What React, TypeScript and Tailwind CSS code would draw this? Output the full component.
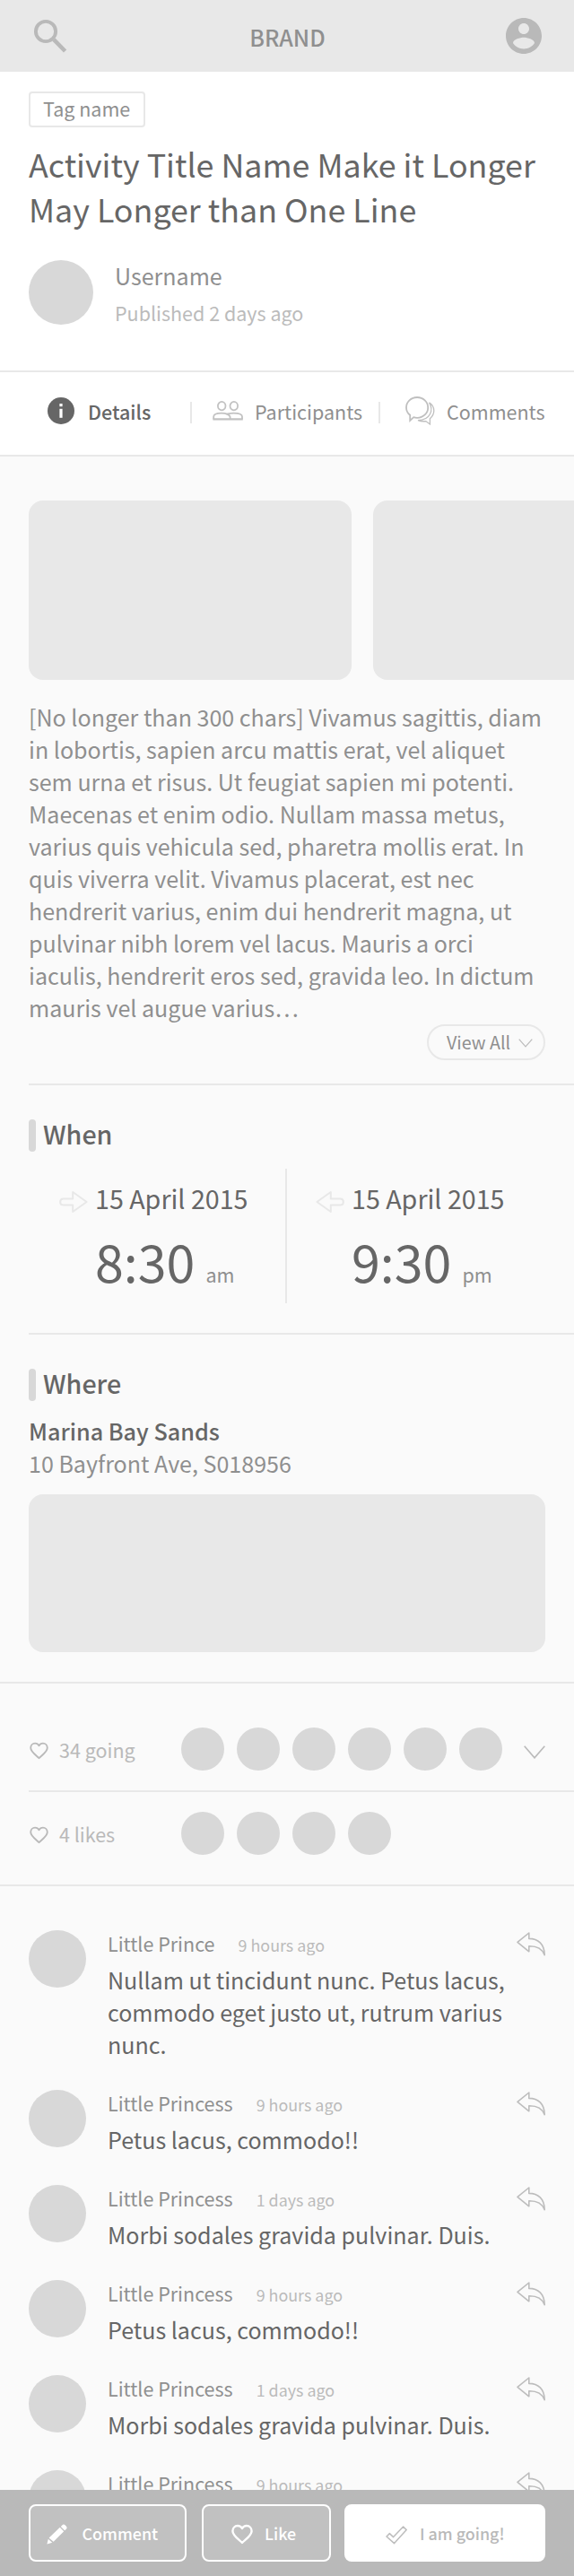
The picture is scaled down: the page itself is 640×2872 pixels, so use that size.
import type { ReactNode } from "react";

function SearchIcon() {
  return (
    <svg width="38" height="38" viewBox="0 0 38 38" fill="none" stroke="#b9b9b9">
      <circle cx="14" cy="14" r="11.1" strokeWidth="3.9" />
      <path d="M23 23.2 L35.6 36" strokeWidth="4.6" />
    </svg>
  );
}

function AccountIcon() {
  return (
    <svg width="48" height="48" viewBox="0 0 24 24" fill="#b9b9b9">
      <path d="M12 2C6.48 2 2 6.48 2 12s4.48 10 10 10 10-4.48 10-10S17.52 2 12 2zm0 3c1.66 0 3 1.34 3 3s-1.34 3-3 3-3-1.34-3-3 1.34-3 3-3zm0 14.2c-2.5 0-4.71-1.28-6-3.22.03-1.99 4-3.08 6-3.08 1.99 0 5.97 1.09 6 3.08-1.29 1.94-3.5 3.22-6 3.22z" />
    </svg>
  );
}

function InfoIcon() {
  return (
    <svg width="30" height="30" viewBox="0 0 30 30">
      <circle cx="15" cy="15" r="15" fill="#666666" />
      <rect x="13.4" y="7" width="3.2" height="3.2" fill="#fff" />
      <rect x="13.4" y="12.8" width="3.2" height="10" fill="#fff" />
    </svg>
  );
}

function PeopleIcon() {
  return (
    <svg width="34" height="22" viewBox="0 0 34 22" fill="none" stroke="#c2c2c2" strokeWidth="1.8" strokeLinejoin="round">
      <ellipse cx="10.2" cy="5.6" rx="4.3" ry="4.7" />
      <ellipse cx="23.8" cy="5.6" rx="4.3" ry="4.7" />
      <path d="M1.2 20.3 V17.6 C1.2 15 5 13.6 10 13.6 C15 13.6 19.6 15.3 19.6 18.4 V20.3" />
      <path d="M15.6 14.9 C17.8 14 20.4 13.6 23.6 13.6 C29 13.6 33 15 33 17.6 V20.3" />
      <path d="M0.4 20.4 H33.8" strokeWidth="2.2" />
    </svg>
  );
}

function CommentsIcon() {
  return (
    <svg width="33" height="33" viewBox="0 0 33 33" fill="none" stroke="#bfbfbf" strokeWidth="1.8">
      <path d="M5.2 27 V20.8 C2.5 18.6 1 15.4 1 12.4 C1 6.2 6.2 1 13.1 1 C20 1 25.2 6.2 25.2 12.4 C25.2 18.6 20 23.8 13.1 23.8 C11.6 23.8 10.4 23.6 9.2 23.2 Z" />
      <path
        d="M26.6 6.8 C29.8 8.8 31.8 12 31.8 15.8 C31.8 19.4 30 22.6 27.4 24.8 V31 L22.8 27.6 C19.8 28 17 27.7 14 26.6 C20 26.6 25 24.4 27.4 19.8 C29.4 16 29.2 11 26.6 6.8 Z"
        strokeWidth="1.3"
      />
    </svg>
  );
}

function ArrowIcon({ flip = false }: { flip?: boolean }) {
  return (
    <svg
      width="32"
      height="30"
      viewBox="0 0 32 30"
      fill="none"
      stroke="#e8e8e8"
      strokeWidth="2"
      strokeLinejoin="round"
      className={flip ? "-scale-x-100" : ""}
    >
      <path d="M15.2 11.4 H4.6 C0 11.4 0 18.4 4.6 18.4 H15.2 V26 L30.6 15 L15.2 4 Z" />
    </svg>
  );
}

function HeartIcon({ width, height, stroke }: { width: number; height: number; stroke: number }) {
  return (
    <svg width={width} height={height} viewBox="0 0 24 22" fill="none" stroke="currentColor" strokeWidth={stroke} strokeLinejoin="round">
      <path d="M12 20.4 C8.4 16.8 1.4 12.4 1.4 7.4 C1.4 4.1 3.8 1.5 7 1.5 C9.2 1.5 11 2.7 12 4.5 C13 2.7 14.8 1.5 17 1.5 C20.2 1.5 22.6 4.1 22.6 7.4 C22.6 12.4 15.6 16.8 12 20.4 Z" />
    </svg>
  );
}

function ReplyIcon() {
  return (
    <svg width="32" height="27" viewBox="0 0 32 27" fill="none" stroke="#bdbdbd" strokeWidth="1.6" strokeLinejoin="round">
      <path d="M1 11.4 L13.8 1 V7.4 C24 7.4 31 13.4 31.2 25.6 C28.4 18.6 23 15.6 13.8 15.8 V21.8 Z" />
    </svg>
  );
}

function PencilIcon() {
  return (
    <svg width="23" height="23" viewBox="0 0 23 23" fill="#fff">
      <path d="M17.2 1.4 C18.2 0.3 19.6 0.3 20.6 1.2 L21.8 2.4 C22.8 3.4 22.8 4.8 21.8 5.8 L20.2 7.2 L15.8 2.9 Z" />
      <path d="M14.8 3.8 L19.2 8.2 L7.6 19.8 L2.6 15.6 Z" />
      <path d="M1.8 16.8 L6.2 20.8 L0.4 22.6 Z" />
    </svg>
  );
}

function CheckIcon() {
  return (
    <svg width="24" height="21" viewBox="0 0 24 21" fill="none" stroke="#bdbdbd" strokeWidth="1.5" strokeLinejoin="round">
      <path d="M1 12 L4.4 8.6 L8.6 12.6 L19.6 1 L23.2 4.6 L9.6 19.6 Z" />
    </svg>
  );
}

function Chevron({ width, height, stroke }: { width: number; height: number; stroke: number }) {
  return (
    <svg width={width} height={height} viewBox={`0 0 ${width} ${height}`} fill="none" stroke="#bbbbbb" strokeWidth={stroke}>
      <path d={`M0.7 0.7 L${width / 2} ${height - 1.2} L${width - 0.7} 0.7`} />
    </svg>
  );
}

function SectionHeading({ children }: { children: ReactNode }) {
  return (
    <div className="flex h-9 gap-2">
      <div className="h-9 w-2 rounded-sm bg-[#d8d8d8]" />
      <h2 className="-mt-[5px] text-[28.65px] leading-[41px] font-medium text-[#666666]">{children}</h2>
    </div>
  );
}

function When({ time, suffix, flip = false }: { time: string; suffix: string; flip?: boolean }) {
  return (
    <div className="flex pt-3">
      <div className="mt-[10px] mr-2">
        <ArrowIcon flip={flip} />
      </div>
      <div>
        <div className="text-[28.65px] leading-[41px] text-[#666666]">15 April 2015</div>
        <div className="mt-2 flex items-baseline">
          <span className="w-[123.5px] text-[57.3px] leading-[83px] text-[#666666]">{time}</span>
          <span className="text-[21.5px] leading-[31px] text-[#8f8f8f]">{suffix}</span>
        </div>
      </div>
    </div>
  );
}

function PeopleRow({ label, count, more = false }: { label: string; count: number; more?: boolean }) {
  return (
    <div className="flex h-12 items-start text-[#b9b9b9]">
      <div className="mt-4 w-[34px] pl-[1px]">
        <HeartIcon width={21} height={20} stroke={2.1} />
      </div>
      <div className="mt-[9px] w-[136px] text-[21.5px] leading-[31px]">{label}</div>
      <div className="flex flex-1 gap-[14px]">
        {Array.from({ length: count }, (_, i) => (
          <div key={i} className="size-12 rounded-full bg-[#d8d8d8]" />
        ))}
      </div>
      {more && (
        <div className="mt-5 mr-8">
          <Chevron width={24} height={15} stroke={1.7} />
        </div>
      )}
    </div>
  );
}

const comments = [
  { name: "Little Prince", time: "9 hours ago", text: "Nullam ut tincidunt nunc. Petus lacus, commodo eget justo ut, rutrum varius nunc." },
  { name: "Little Princess", time: "9 hours ago", text: "Petus lacus, commodo!!" },
  { name: "Little Princess", time: "1 days ago", text: "Morbi sodales gravida pulvinar. Duis." },
  { name: "Little Princess", time: "9 hours ago", text: "Petus lacus, commodo!!" },
  { name: "Little Princess", time: "1 days ago", text: "Morbi sodales gravida pulvinar. Duis." },
  { name: "Little Princess", time: "9 hours ago", text: "" },
];

export default function App() {
  return (
    <div className="relative h-[2872px] w-[640px] overflow-hidden bg-[#fafafa] font-['Noto_Sans_CJK_SC','Noto_Sans',sans-serif] text-[#8f8f8f]">
      <header className="flex h-20 items-start justify-between bg-[#e8e8e8] pr-8 pl-[37px]">
        <div className="mt-[21px] w-[87px]">
          <SearchIcon />
        </div>
        <div className="mt-[23px] text-[25.06px] leading-[36px] font-medium">BRAND</div>
        <div className="mt-4 flex w-[91px] justify-end">
          <AccountIcon />
        </div>
      </header>

      <section className="h-[335px] border-b-2 border-[#e8e8e8] bg-white px-8 pt-[22px]">
        <div className="h-10 w-[130px] rounded border-2 border-[#e8e8e8] pt-px pl-[14px] text-[21.5px] leading-[31px]">Tag name</div>
        <h1 className="mt-[15px] text-[35.8px] leading-[50px] text-[#666666]">
          Activity Title Name Make it Longer
          <br />
          May Longer than One Line
        </h1>
        <div className="mt-[33px] flex gap-6">
          <div className="size-[72px] rounded-full bg-[#d8d8d8]" />
          <div className="-mt-px">
            <div className="text-[25.06px] leading-[36px]">Username</div>
            <div className="mt-2 text-[21.5px] leading-[31px] text-[#bbbbbb]">Published 2 days ago</div>
          </div>
        </div>
      </section>

      <nav className="flex h-[94px] items-start border-b-2 border-[#e8e8e8] bg-white text-[21.5px] leading-[31px]">
        <div className="flex w-[212px] pt-7 pl-[53px] font-medium text-[#666666]">
          <div className="w-[45px]">
            <InfoIcon />
          </div>
          Details
        </div>
        <div className="mt-[33px] h-6 w-0.5 bg-[#e8e8e8]" />
        <div className="flex w-[208px] pt-7 pl-[23px]">
          <div className="mt-1 w-[47px]">
            <PeopleIcon />
          </div>
          Participants
        </div>
        <div className="mt-[33px] h-6 w-0.5 bg-[#e8e8e8]" />
        <div className="flex pt-7 pl-7">
          <div className="-mt-px w-[46px]">
            <CommentsIcon />
          </div>
          Comments
        </div>
      </nav>

      <section className="pt-[49px] pl-8">
        <div className="flex gap-6 overflow-hidden">
          <div className="h-[200px] w-[360px] shrink-0 rounded-2xl bg-[#e8e8e8]" />
          <div className="h-[200px] w-[360px] shrink-0 rounded-2xl bg-[#e8e8e8]" />
        </div>
        <p className="mt-[23px] text-[25.06px] leading-[36px] whitespace-nowrap">
          [No longer than 300 chars] Vivamus sagittis, diam
          <br />
          in lobortis, sapien arcu mattis erat, vel aliquet
          <br />
          sem urna et risus. Ut feugiat sapien mi potenti.
          <br />
          Maecenas et enim odio. Nullam massa metus,
          <br />
          varius quis vehicula sed, pharetra mollis erat. In
          <br />
          quis viverra velit. Vivamus placerat, est nec
          <br />
          hendrerit varius, enim dui hendrerit magna, ut
          <br />
          pulvinar nibh lorem vel lacus. Mauris a orci
          <br />
          iaculis, hendrerit eros sed, gravida leo. In dictum
          <br />
          mauris vel augue varius…
        </p>
        <div className="mt-px flex justify-end border-b-2 border-[#e8e8e8] pr-8 pb-[26px]">
          <button className="flex h-10 w-[132px] items-start rounded-full border-2 border-[#e8e8e8] pt-[3px] pl-5 text-[19.7px] leading-[29px]">
            <span className="w-[79.5px] text-left">View All</span>
            <span className="mt-[11px]">
              <Chevron width={16} height={10} stroke={1.2} />
            </span>
          </button>
        </div>
      </section>

      <section className="ml-8 border-b-2 border-[#e8e8e8] pt-[38px] pb-[33px]">
        <SectionHeading>When</SectionHeading>
        <div className="mt-[19px] flex h-[150px]">
          <div className="w-[286px] pl-[34px]">
            <When time="8:30" suffix="am" />
          </div>
          <div className="w-0.5 bg-[#e8e8e8]" />
          <div className="pl-8">
            <When time="9:30" suffix="pm" flip />
          </div>
        </div>
      </section>

      <section className="border-b-2 border-[#e8e8e8] px-8 pt-[38px] pb-[33px]">
        <SectionHeading>Where</SectionHeading>
        <div className="mt-[15px] text-[25.2px] leading-[36px] font-medium text-[#666666]">Marina Bay Sands</div>
        <div className="text-[25.06px] leading-[36px]">10 Bayfront Ave, S018956</div>
        <div className="mt-[17px] h-44 rounded-2xl bg-[#e8e8e8]" />
      </section>

      <section className="border-b-2 border-[#e8e8e8] pt-[49px] pb-[33px] pl-8">
        <div className="border-b-2 border-[#e8e8e8] pb-[22px]">
          <PeopleRow label="34 going" count={6} more />
        </div>
        <div className="pt-[22px]">
          <PeopleRow label="4 likes" count={4} />
        </div>
      </section>

      <section className="flex flex-col gap-[33px] px-8 pt-[49px]">
        {comments.map((c, i) => (
          <article key={i} className="flex">
            <div className="mr-6 size-16 shrink-0 rounded-full bg-[#d8d8d8]" />
            <div className="-mt-px w-[452px]">
              <div className="flex h-[31px] items-baseline gap-[26px]">
                <span className="text-[21.5px] leading-[31px]">{c.name}</span>
                <span className="text-[17.9px] leading-[26px] text-[#bbbbbb]">{c.time}</span>
              </div>
              <p className="mt-[7px] text-[25.06px] leading-[36px] text-[#666666]">{c.text}</p>
            </div>
            <div className="mt-[2px] ml-1">
              <ReplyIcon />
            </div>
          </article>
        ))}
      </section>

      <footer className="absolute bottom-0 left-0 flex h-24 w-[640px] bg-[#b9b9b9] px-8 pt-4 text-[17.9px] leading-[26px] font-medium text-white">
        <button className="flex h-16 w-44 items-start rounded-lg border-2 border-white bg-[#c1c1c1] pt-[17px] pl-[18px]">
          <span className="mt-[3px] w-[39.5px]">
            <PencilIcon />
          </span>
          Comment
        </button>
        <button className="ml-[17px] flex h-16 w-36 items-start rounded-lg border-2 border-white bg-[#c1c1c1] pt-[17px] pl-[31px]">
          <span className="mt-[3px] w-[37px]">
            <HeartIcon width={24} height={23} stroke={2.4} />
          </span>
          Like
        </button>
        <button className="ml-[15px] flex h-16 w-56 items-start rounded-lg bg-white pt-[19px] pl-[46px] text-[#b9b9b9]">
          <span className="mt-[5px] w-[38px]">
            <CheckIcon />
          </span>
          I am going!
        </button>
      </footer>
    </div>
  );
}
